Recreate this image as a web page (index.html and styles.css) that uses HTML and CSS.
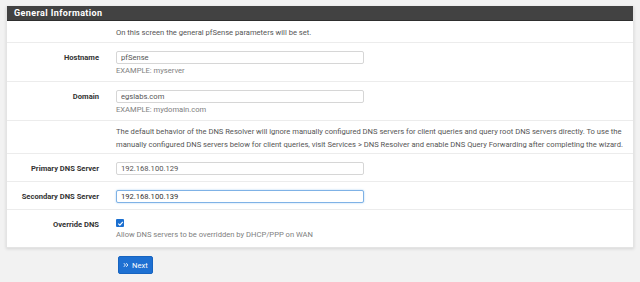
FILE: index.html
```html
<!DOCTYPE html>
<html lang="en">
<head>
    <meta charset="utf-8">
    <title>pfSense Setup - General Information</title>
    <link rel="stylesheet" href="styles.css">
</head>
<body>
    <div class="panel">
        <div class="panel-heading">General Information</div>

        <div class="form-row row-intro">
            <div class="form-label"></div>
            <div class="form-field">
                <p class="note">On this screen the general pfSense parameters will be set.</p>
            </div>
        </div>

        <div class="form-row">
            <label class="form-label">Hostname</label>
            <div class="form-field">
                <input class="form-input" type="text" value="pfSense">
                <span class="help">EXAMPLE: myserver</span>
            </div>
        </div>

        <div class="form-row">
            <label class="form-label">Domain</label>
            <div class="form-field">
                <input class="form-input" type="text" value="egslabs.com">
                <span class="help">EXAMPLE: mydomain.com</span>
            </div>
        </div>

        <div class="form-row row-note">
            <div class="form-label"></div>
            <div class="form-field">
                <p class="note note-wide">The default behavior of the DNS Resolver will ignore manually configured DNS servers for client queries and query root DNS servers directly. To use the manually configured DNS servers below for client queries, visit Services &gt; DNS Resolver and enable DNS Query Forwarding after completing the wizard.</p>
            </div>
        </div>

        <div class="form-row row-tight">
            <label class="form-label">Primary DNS Server</label>
            <div class="form-field">
                <input class="form-input" type="text" value="192.168.100.129">
            </div>
        </div>

        <div class="form-row row-tight">
            <label class="form-label">Secondary DNS Server</label>
            <div class="form-field">
                <input class="form-input focused" type="text" value="192.168.100.139">
            </div>
        </div>

        <div class="form-row row-last">
            <label class="form-label">Override DNS</label>
            <div class="form-field">
                <span class="checkbox">
                    <svg viewBox="0 0 10 10" width="7" height="7"><path d="M1.8 5.2 L4.1 7.4 L8.3 2.6" fill="none" stroke="#fff" stroke-width="1.6"/></svg>
                </span>
                <span class="help">Allow DNS servers to be overridden by DHCP/PPP on WAN</span>
            </div>
        </div>
    </div>

    <div class="actions">
        <button class="btn-next" type="button">
            <svg viewBox="0 0 10 10" width="6" height="6"><path d="M1.5 2 L4 5 L1.5 8 M5.5 2 L8 5 L5.5 8" fill="none" stroke="#fff" stroke-width="1.5"/></svg>
            Next
        </button>
    </div>
</body>
</html>
```

FILE: styles.css
```css
body {
    margin: 0;
    padding: 6px;
    background: #f2f2f2;
    font-family: Roboto, "Liberation Sans", sans-serif;
    font-size: 7.6px;
    color: #555;
}

.panel {
    background: #fff;
    border: 1px solid #e4e4e4;
    border-top: none;
    box-shadow: 0 1px 3px rgba(0, 0, 0, 0.12);
}

.panel-heading {
    background: #424242;
    border-bottom: 1px solid #2e2e2e;
    color: #fff;
    font-weight: bold;
    font-size: 9px;
    letter-spacing: 0.4px;
    line-height: 14px;
    padding: 0 7px;
}

.form-row {
    display: flex;
    border-bottom: 1px solid #ececec;
    padding: 8px 0 5px;
}

.row-intro {
    padding: 5px 0 3px;
}

.row-note {
    padding: 4px 0 2px;
}

.row-tight {
    padding-bottom: 6px;
}

.row-last {
    border-bottom: none;
    padding-bottom: 7px;
}

.form-label {
    width: 92px;
    flex: none;
    padding-right: 12px;
    text-align: right;
    font-weight: bold;
    color: #333;
    line-height: 13px;
}

.form-field {
    padding-left: 5px;
    display: flex;
    flex-direction: column;
    align-items: flex-start;
}

.note {
    margin: 0;
    color: #555;
    line-height: 13px;
}

.note-wide {
    width: 515px;
}

.form-input {
    box-sizing: border-box;
    width: 248px;
    height: 13px;
    margin: 0;
    padding: 0 4px;
    border: 1px solid #d6d6d6;
    border-radius: 2px;
    font-family: inherit;
    font-size: 7.6px;
    color: #555;
    background: #fff;
    outline: none;
}

.form-input.focused {
    border-color: #7fb2e6;
    box-shadow: 0 0 2px rgba(102, 175, 233, 0.6);
    color: #333;
}

.help {
    color: #808080;
    line-height: 10px;
    margin-top: 2px;
}

.checkbox {
    width: 8px;
    height: 8px;
    margin-top: 1px;
    border-radius: 1px;
    background: #1b6fd0;
    display: flex;
    align-items: center;
    justify-content: center;
}

.row-last .help {
    margin-top: 3px;
}

.actions {
    padding: 8px 0 0 112px;
}

.btn-next {
    display: flex;
    align-items: center;
    gap: 3px;
    height: 18px;
    padding: 0 4px 0 4px;
    border: 1px solid #1764c0;
    border-radius: 2px;
    background: #1e70d2;
    color: #fff;
    font-family: inherit;
    font-size: 7.6px;
}
```
